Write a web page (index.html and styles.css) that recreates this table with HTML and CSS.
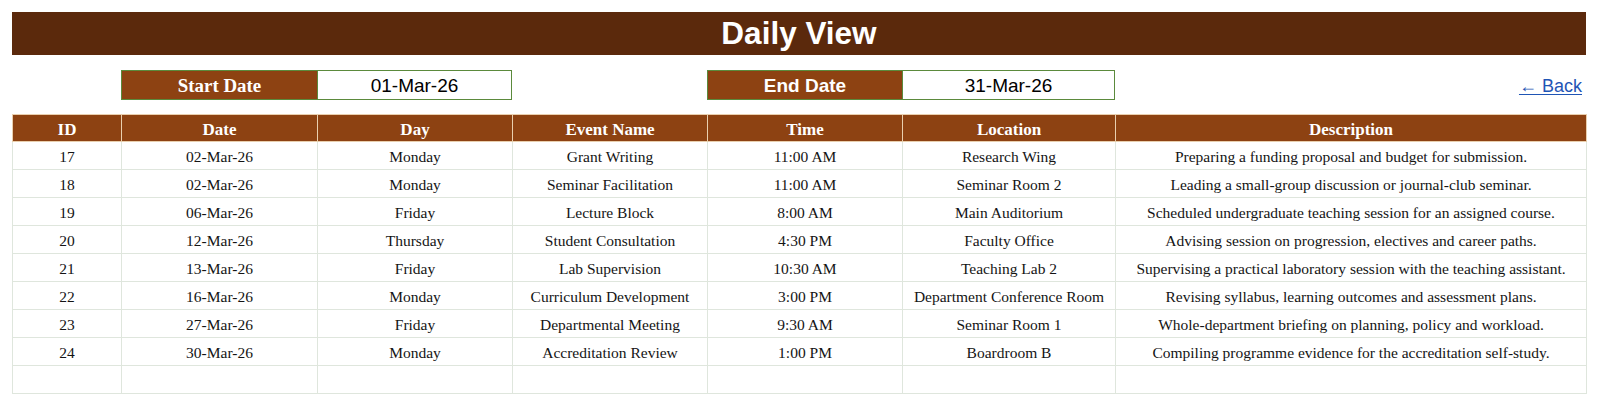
FILE: index.html
```html
<!DOCTYPE html>
<html lang="en">
<head>
<meta charset="utf-8">
<title>Daily View</title>
<link rel="stylesheet" href="styles.css">
</head>
<body>
<div class="page">
  <header class="title-bar">Daily View</header>

  <div class="range-row">
    <div class="range-label serif-label">Start Date</div>
    <div class="range-value">01-Mar-26</div>
    <div class="range-label sans-label end-label">End Date</div>
    <div class="range-value">31-Mar-26</div>
    <a class="back-link" href="#">&larr; Back</a>
  </div>

  <table class="events">
    <colgroup>
      <col class="c-id"><col class="c-date"><col class="c-day"><col class="c-event"><col class="c-time"><col class="c-loc"><col class="c-desc">
    </colgroup>
    <thead>
      <tr><th>ID</th><th>Date</th><th>Day</th><th>Event Name</th><th>Time</th><th>Location</th><th>Description</th></tr>
    </thead>
    <tbody>
      <tr><td>17</td><td>02-Mar-26</td><td>Monday</td><td>Grant Writing</td><td>11:00 AM</td><td>Research Wing</td><td>Preparing a funding proposal and budget for submission.</td></tr>
      <tr><td>18</td><td>02-Mar-26</td><td>Monday</td><td>Seminar Facilitation</td><td>11:00 AM</td><td>Seminar Room 2</td><td>Leading a small-group discussion or journal-club seminar.</td></tr>
      <tr><td>19</td><td>06-Mar-26</td><td>Friday</td><td>Lecture Block</td><td>8:00 AM</td><td>Main Auditorium</td><td>Scheduled undergraduate teaching session for an assigned course.</td></tr>
      <tr><td>20</td><td>12-Mar-26</td><td>Thursday</td><td>Student Consultation</td><td>4:30 PM</td><td>Faculty Office</td><td>Advising session on progression, electives and career paths.</td></tr>
      <tr><td>21</td><td>13-Mar-26</td><td>Friday</td><td>Lab Supervision</td><td>10:30 AM</td><td>Teaching Lab 2</td><td>Supervising a practical laboratory session with the teaching assistant.</td></tr>
      <tr><td>22</td><td>16-Mar-26</td><td>Monday</td><td>Curriculum Development</td><td>3:00 PM</td><td>Department Conference Room</td><td>Revising syllabus, learning outcomes and assessment plans.</td></tr>
      <tr><td>23</td><td>27-Mar-26</td><td>Friday</td><td>Departmental Meeting</td><td>9:30 AM</td><td>Seminar Room 1</td><td>Whole-department briefing on planning, policy and workload.</td></tr>
      <tr><td>24</td><td>30-Mar-26</td><td>Monday</td><td>Accreditation Review</td><td>1:00 PM</td><td>Boardroom B</td><td>Compiling programme evidence for the accreditation self-study.</td></tr>
      <tr class="empty"><td></td><td></td><td></td><td></td><td></td><td></td><td></td></tr>
    </tbody>
  </table>
</div>
</body>
</html>
```

FILE: styles.css
```css
:root {
  --cols: 109px 196px 195px 195px 195px 213px 471px;
  --brown-dark: #5b290c;
  --brown: #8d4212;
  --green: #5b8a3c;
  --grid: #dfe6dd;
}

* { box-sizing: border-box; }

html, body {
  margin: 0;
  padding: 0;
  background: #ffffff;
}

body {
  font-family: "Liberation Serif", "Times New Roman", serif;
  color: #111;
}

.page {
  width: 1574px;
  margin: 12px 0 0 12px;
}

.title-bar {
  height: 43px;
  background: var(--brown-dark);
  color: #fff;
  font-family: "Liberation Sans", Arial, sans-serif;
  font-weight: bold;
  font-size: 31.5px;
  line-height: 43px;
  text-align: center;
}

.range-row {
  display: grid;
  grid-template-columns: var(--cols);
  height: 30px;
  margin-top: 15px;
  align-items: stretch;
}

.range-label {
  background: var(--brown);
  color: #fff;
  font-weight: bold;
  border: 1px solid var(--green);
  border-right: none;
  display: flex;
  align-items: center;
  justify-content: center;
  padding-top: 1px;
}

.serif-label {
  grid-column: 2;
  font-family: "Liberation Serif", "Times New Roman", serif;
  font-size: 18.9px;
}

.sans-label {
  font-family: "Liberation Sans", Arial, sans-serif;
  font-size: 19px;
}

.end-label { grid-column: 5; }

.range-value {
  background: #fff;
  border: 1px solid var(--green);
  font-family: "Liberation Sans", Arial, sans-serif;
  font-size: 19px;
  color: #000;
  display: flex;
  align-items: center;
  justify-content: center;
  padding-top: 1px;
}

.back-link {
  grid-column: 7;
  justify-self: end;
  align-self: center;
  margin-right: 4px;
  margin-top: 2px;
  font-family: "Liberation Sans", Arial, sans-serif;
  font-size: 18px;
  color: #1f55b5;
  text-decoration: underline;
  text-underline-offset: 2px;
}

.events {
  width: 1574px;
  margin-top: 14px;
  border-collapse: collapse;
  table-layout: fixed;
}

.c-id { width: 109px; }
.c-date { width: 196px; }
.c-day { width: 195px; }
.c-event { width: 195px; }
.c-time { width: 195px; }
.c-loc { width: 213px; }
.c-desc { width: 471px; }

.events th {
  height: 27px;
  padding: 3px 0 0;
  background: var(--brown);
  color: #fff;
  font-weight: bold;
  font-size: 17px;
  text-align: center;
  vertical-align: middle;
  border: 1px solid #e9cfae;
}

.events td {
  height: 28px;
  padding: 3px 2px 0;
  font-size: 15.5px;
  text-align: center;
  vertical-align: middle;
  white-space: nowrap;
  border: 1px solid var(--grid);
  color: #141414;
}
```
